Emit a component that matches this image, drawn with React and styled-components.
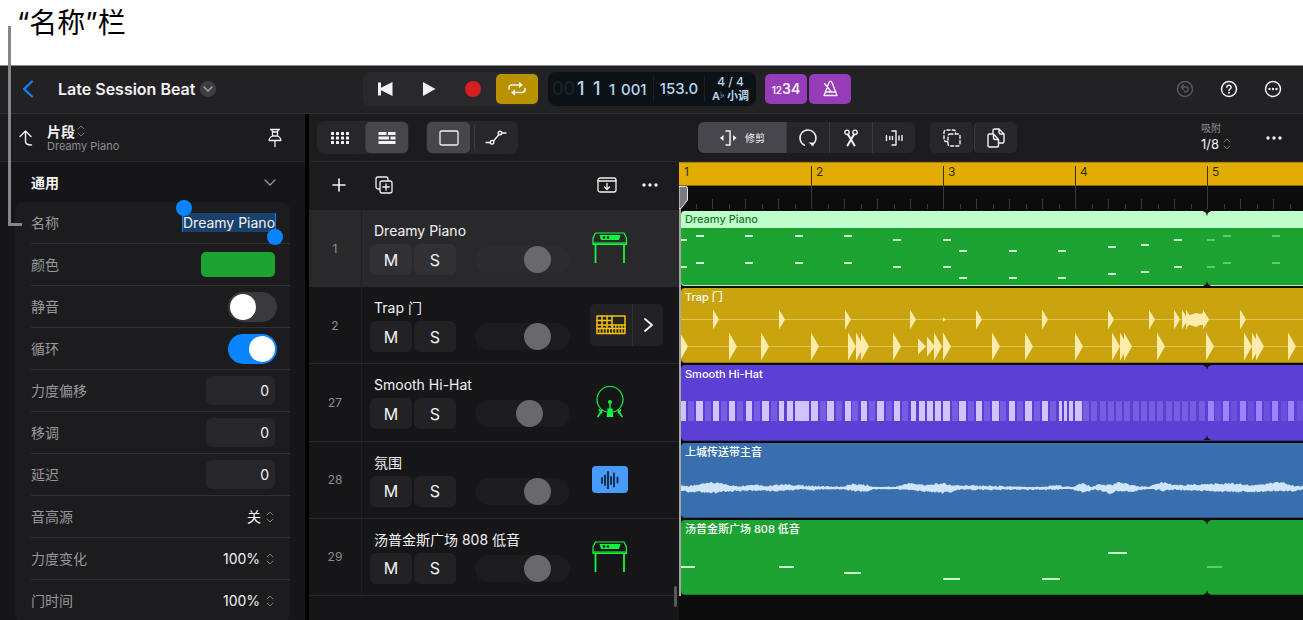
import React, { useState } from 'react'
import styled, { createGlobalStyle } from 'styled-components'

const GlobalStyle = createGlobalStyle`
  * {
    box-sizing: border-box;
    margin: 0;
    padding: 0;
  }
  body {
    background: #fff;
    color: #f2f2f4;
    font-family: Inter, 'Noto Sans CJK SC', sans-serif;
    font-size: 14px;
  }
  button,
  input,
  select {
    border: none;
    background: none;
    color: inherit;
    font-family: inherit;
    font-size: 14px;
    outline: 0;
  }
  button {
    cursor: pointer;
  }
`

/* ICONS */

const Icon = styled.svg`
  display: block;
  flex-shrink: 0;
  fill: none;
  stroke: currentColor;
  stroke-width: ${(p) => p.$weight || 1.5};
  stroke-linecap: round;
  stroke-linejoin: round;
  .solid {
    fill: currentColor;
    stroke: none;
  }
`

const UpDown = () => (
  <Icon width='8' height='12' viewBox='0 0 8 12' $weight={1}>
    <path d='M1 4 4 1 7 4M1 8 4 11 7 8' />
  </Icon>
)

const Dots = () => (
  <Icon width='16' height='4' viewBox='0 0 16 4'>
    <circle className='solid' cx='2' cy='2' r='1.7' />
    <circle className='solid' cx='8' cy='2' r='1.7' />
    <circle className='solid' cx='14' cy='2' r='1.7' />
  </Icon>
)

const Keyboard = () => (
  <Icon width='36' height='32' viewBox='0 0 36 32' $weight={1.2}>
    <path d='M3.5 1h28.500l2.500 5v6.500H1V6z' />
    <path className='solid' d='M7.500 3h21L27 8H9z' />
    <path d='M1 11h33.500' strokeWidth='0.8' />
    <path className='solid' d='M1 10.500h34V13H1z' opacity='0.6' />
    <path d='M3.500 13v18M32 13v18' strokeWidth='1.8' strokeLinecap='butt' />
    <circle cx='12' cy='5.500' r='1.3' fill='#161618' stroke='none' />
    <circle cx='16' cy='5.500' r='1.3' fill='#161618' stroke='none' />
  </Icon>
)

const DrumMachine = () => (
  <Icon width='30' height='20' viewBox='0 0 30 20' $weight={1.5}>
    <path d='M1 1h28v17.500H1z' />
    <path d='M1 5.500h15M1 10h28M1 13.500h28M6 1v12.500M11 1v12.500M16 1v12.500' />
    <path d='M4 13v5M7.200 13v5M10.300 13v5M13.500 13v5M16.700 10v8M19.800 10v8M23 10v8M26 10v8' strokeWidth='1.2' />
  </Icon>
)

const KickDrum = () => (
  <Icon width='30' height='34' viewBox='0 0 30 34' $weight={1.2}>
    <path d='M11.500 27A13 13 0 1 1 18.500 27' />
    <circle className='solid' cx='15' cy='17' r='2' />
    <path d='M15 18v8' strokeWidth='1.4' />
    <path className='solid' d='M12.500 23.500h5l.8 8.500h-6.600z' />
    <path d='M7 25.500 3 31.500M4.500 25l2 2.500M23 25.500 27 31.500M25.500 25l-2 2.500' strokeWidth='1.7' />
  </Icon>
)

const AudioWave = () => (
  <Icon width='18' height='18' viewBox='0 0 18 18' $weight={1.8}>
    <path d='M1 7v5M4 4.500v9.500M7 1v17M10 6v7M13 2.500v13M16.500 6.500v5' />
  </Icon>
)

/* LAYOUT */

const Page = styled.div`
  position: relative;
  display: flex;
  flex-direction: column;
  height: 100vh;
  overflow: hidden;
`
const Caption = styled.p`
  flex: none;
  height: 66px;
  padding: 3px 17px;
  border-bottom: 1px solid #86898a;
  color: #000;
  font-size: 28px;
  line-height: 40px;
`
const Callout = styled.span`
  position: absolute;
  z-index: 2;
  left: 8px;
  top: 26px;
  width: 14px;
  height: 200px;
  border: solid #868688;
  border-width: 0 0 3px 3px;
`

const Header = styled.header`
  display: flex;
  flex: none;
  align-items: center;
  height: 48px;
  padding-bottom: 2px;
  background: #222224;
  border-bottom: 1px solid #303032;
`
const Project = styled.div`
  display: flex;
  align-items: center;
  width: 363px;
  padding-left: 22px;
  h1 {
    margin: 0 5px 0 24px;
    font-size: 16px;
    font-weight: 600;
  }
`
const IconButton = styled.button`
  display: flex;
  align-items: center;
  justify-content: center;
  color: ${(p) => p.$color || '#f2f2f4'};
`
const RoundButton = styled(IconButton)`
  width: 16px;
  height: 16px;
  border-radius: 50%;
  background: #3e3e42;
  color: #a0a0a4;
`
const Transport = styled.div`
  display: flex;
  align-items: center;
  height: 34px;
  padding-right: 1px;
  border-radius: 6px;
  background: #29292d;
`
const TransportButton = styled(IconButton)`
  width: 44px;
  height: 30px;
`
const ModeButton = styled(IconButton)`
  width: 42px;
  height: 30px;
  margin-left: ${(p) => (p.$first ? '1px' : '2px')};
  border-radius: 5px;
  background: ${(p) => p.$bg};
  font-size: 14px;
  font-weight: 600;
  small {
    font-size: 10px;
  }
`
const Display = styled.div`
  display: flex;
  align-items: center;
  width: 208px;
  height: 34px;
  margin: 0 8px 0 9px;
  padding-left: 4px;
  border-radius: 8px;
  background: #0b1115;
  color: #b5d6ef;
  font-size: 15px;
  font-weight: 500;
`
const Position = styled.div`
  display: flex;
  align-items: baseline;
  width: 101px;
  font-size: 18px;
  span {
    width: 25px;
    color: #1b2329;
  }
  b {
    width: 16px;
    font-weight: 500;
  }
  small {
    width: 12px;
    font-size: 15px;
  }
`
const Tempo = styled.div`
  width: 52px;
  border: solid #1a2126;
  border-width: 0 1px;
  line-height: 26px;
  text-align: center;
`
const Signature = styled.div`
  flex: 1;
  font-size: 12px;
  line-height: 14px;
  text-align: center;
  p:last-child {
    font-size: 11px;
    font-weight: 600;
  }
  sup {
    font-family: 'DejaVu Sans', sans-serif;
    font-size: 9px;
    line-height: 0;
    vertical-align: 2px;
  }
`
const HeaderActions = styled.div`
  display: flex;
  gap: 26px;
  margin-left: auto;
  padding-right: 21px;
`

const Workspace = styled.div`
  display: flex;
  flex: 1;
  min-height: 0;
`

/* INSPECTOR */

const Inspector = styled.aside`
  flex: none;
  width: 309px;
  border-right: 4px solid #000;
  background: #161618;
`
const InspectorHead = styled.div`
  display: flex;
  align-items: center;
  height: 48px;
  padding: 0 23px 0 19px;
  border-bottom: 1px solid #29292b;
  background: #1c1c1e;
`
const InspectorTitle = styled.div`
  flex: 1;
  padding-left: 13px;
  button {
    display: flex;
    align-items: center;
    gap: 2px;
    height: 18px;
    font-weight: 600;
    svg {
      color: #77777b;
    }
  }
  p {
    color: #8d8d92;
    font-size: 11px;
    line-height: 13px;
  }
`
const SectionHead = styled.button`
  display: flex;
  align-items: center;
  justify-content: space-between;
  width: 100%;
  height: 40px;
  padding: 0 29px 0 31px;
  font-weight: 700;
  svg {
    color: #98989d;
  }
`
const Card = styled.div`
  margin: 0 15px;
  padding-left: 16px;
  border-radius: 8px;
  background: #1c1c1e;
`
const Field = styled.div`
  display: flex;
  align-items: center;
  justify-content: space-between;
  height: 42px;
  padding-right: ${(p) => (p.$wide ? '13px' : '15px')};
  border-bottom: 1px solid #303032;
  label {
    padding-bottom: 2px;
    color: #98989d;
  }
`
const NameEdit = styled.div`
  position: relative;
  background: #1a416b;
  box-shadow: -1px 0 0 #0a84ff, 1px 0 0 #0a84ff;
  input {
    display: block;
    width: 92px;
    height: 19px;
    text-align: right;
  }
  &::before,
  &::after {
    content: '';
    position: absolute;
    width: 16px;
    height: 16px;
    border-radius: 50%;
    background: #0a84ff;
  }
  &::before {
    left: -7px;
    top: -13px;
  }
  &::after {
    right: -8px;
    bottom: -13px;
  }
`
const Swatch = styled.button`
  width: 74px;
  height: 25px;
  border-radius: 5px;
  background: #1da331;
`
const Switch = styled.input`
  appearance: none;
  display: flex;
  align-items: center;
  width: 49px;
  height: 30px;
  padding: 2px;
  border-radius: 15px;
  background: #3a393e;
  cursor: pointer;
  &::before {
    content: '';
    width: 26px;
    height: 26px;
    border-radius: 50%;
    background: #fff;
  }
  &:checked {
    justify-content: flex-end;
    background: #0a84ff;
  }
`
const NumberInput = styled.input`
  width: 69px;
  height: 29px;
  padding-right: 6px;
  border-radius: 6px;
  background: #27262b;
  text-align: right;
`
const Picker = styled.div`
  display: flex;
  align-items: center;
  gap: ${(p) => p.$gap || 5}px;
  padding-right: 1px;
  color: #77777b;
  select {
    appearance: none;
    color: #f2f2f4;
    font-size: ${(p) => p.$size || 14}px;
  }
`

/* TOOLBAR */

const Main = styled.main`
  display: flex;
  flex: 1;
  flex-direction: column;
  min-width: 0;
`
const Toolbar = styled.div`
  display: flex;
  flex: none;
  align-items: center;
  height: 48px;
  padding-left: 8px;
  border-bottom: 1px solid #29292b;
  background: #1c1c1e;
`
const ViewGroup = styled.div`
  display: flex;
  gap: 4px;
  margin-right: 17px;
  padding: 1px;
  border-radius: 7px;
  background: #27272b;
`
const ToolButton = styled(IconButton)`
  gap: 8px;
  width: ${(p) => (p.$wide ? '88px' : '43px')};
  height: 31px;
  border-radius: ${(p) => (p.$flat ? '0' : '5px')};
  background: ${(p) => (p.$active ? '#47464c' : '#27272b')};
  font-size: 10px;
  & + & {
    border-left: ${(p) => (p.$flat ? '1px solid #3c3c40' : 'none')};
  }
`
const EditTools = styled.div`
  display: flex;
  margin: 0 15px 0 163px;
  overflow: hidden;
  border-radius: 6px;
`
const ClipTools = styled.div`
  display: flex;
  gap: 1px;
`
const Snap = styled.div`
  margin-left: auto;
  margin-right: 34px;
  padding-bottom: 2px;
  label {
    display: block;
    padding-bottom: 1px;
    color: #8d8d92;
    font-size: 10px;
    line-height: 14px;
  }
`
const MoreTools = styled(IconButton)`
  margin-right: 21px;
`

/* TRACKS */

const Arrange = styled.div`
  display: flex;
  flex: 1;
  min-height: 0;
`
const TrackList = styled.section`
  position: relative;
  flex: none;
  width: 370px;
  background: #161618;
`
const TrackTools = styled.div`
  display: flex;
  align-items: center;
  height: 48px;
  padding: 0 21px 2px 23px;
  background: #1c1c1e;
  button:nth-child(2) {
    margin: 0 auto 0 29px;
  }
  button:last-child {
    margin-left: 25px;
  }
`
const Rows = styled.div`
  display: grid;
  grid-template-rows: repeat(5, 1fr);
  height: 386px;
`
const TrackRow = styled.div`
  display: flex;
  border-bottom: 1px solid #29292b;
  background: ${(p) => (p.$selected ? '#29292b' : 'transparent')};
`
const TrackNumber = styled.div`
  display: flex;
  align-items: center;
  justify-content: center;
  width: 53px;
  border-right: 1px solid #202022;
  color: #8d8d92;
  font-size: 12px;
`
const TrackBody = styled.div`
  padding: 10px 0 0 8px;
  h2 {
    padding-left: 4px;
    font-size: 14px;
    font-weight: 400;
    line-height: 22px;
  }
`
const Controls = styled.div`
  display: flex;
  align-items: center;
  gap: 2px;
  margin-top: 2px;
`
const TrackButton = styled.button`
  width: 42px;
  height: 31px;
  border-radius: 6px;
  background: ${(p) => (p.$selected ? '#313135' : '#222225')};
  font-size: 16px;
`
const Volume = styled.input`
  appearance: none;
  width: 95px;
  height: 27px;
  margin-left: 17px;
  border-radius: 14px;
  background: ${(p) => (p.$selected ? '#2c2c30' : '#1c1c1e')};
  &::-webkit-slider-thumb {
    appearance: none;
    width: 27px;
    height: 27px;
    border-radius: 50%;
    background: #69696c;
  }
`
const Instrument = styled.div`
  display: flex;
  align-self: center;
  width: 73px;
  height: 42px;
  margin: 0 16px 0 auto;
  border-radius: 5px;
  background: ${(p) => (p.$boxed ? '#222225' : 'none')};
`
const InstrumentButton = styled(IconButton)`
  width: ${(p) => (p.$boxed ? '42px' : '40px')};
`
const Expand = styled(IconButton)`
  flex: 1;
  border-left: 1px solid #303033;
`
const AudioTile = styled.span`
  display: flex;
  align-items: center;
  justify-content: center;
  width: 36px;
  height: 27px;
  border-radius: 4px;
  background: #479bff;
  color: #13233a;
`
const ScrollThumb = styled.span`
  position: absolute;
  right: 2px;
  top: 424px;
  width: 3px;
  height: 21px;
  border-radius: 2px;
  background: #58585b;
`

/* TIMELINE */

const Timeline = styled.section`
  position: relative;
  flex: 1;
  min-width: 0;
  overflow: hidden;
  background: #0c0c0d;
`
const Ruler = styled.div`
  display: flex;
  height: 48px;
  overflow: hidden;
`
const Bar = styled.div`
  flex: 0 0 132px;
  .cycle {
    height: 24px;
    padding-top: 3px;
    border-top: 1px solid #a98205;
    border-bottom: 1px solid #8a6a08;
    background: #e1ad05;
  }
  .cycle span {
    display: block;
    height: 20px;
    padding-left: 4px;
    border-left: 1px solid ${(p) => (p.$first ? 'transparent' : '#3d2f02')};
    color: #3a2c00;
    font-size: 12px;
    line-height: 11px;
  }
`
const Ticks = styled.div`
  display: flex;
  align-items: flex-end;
  height: 23px;
`
const Tick = styled.i`
  flex: 1;
  height: ${(p) => p.$h}px;
  border-left: 1px solid #38383b;
`
const Lane = styled.div`
  display: flex;
  padding: 1px 0 1px 2px;
`
const Region = styled.div`
  display: grid;
  flex: 1;
  overflow: hidden;
  border-radius: 4px 0 0 4px;
  background: ${(p) => p.$color};
  box-shadow: inset 0 -1px 0 ${(p) => (p.$selected ? '#a9f5b6' : 'rgba(0, 0, 0, 0.25)')};
  h3,
  svg {
    grid-area: 1 / 1;
  }
  h3 {
    height: 17px;
    padding-left: 4px;
    background: ${(p) => (p.$selected ? '#bfffca' : 'none')};
    color: ${(p) => (p.$selected ? '#17782a' : '#fff')};
    font-size: 11px;
    font-weight: 500;
    line-height: ${(p) => (p.$selected ? '17px' : '19px')};
  }
`
const Playhead = styled.span`
  position: absolute;
  left: 0;
  top: 24px;
  width: 2px;
  height: 410px;
  background: #a5a5a7;
  svg {
    display: block;
  }
`

/* Region drawings: x counts from the left edge of the region, in pixels */

const LOOP_X = 526

const pianoNotes = [
  [0, 28, 6], [15, 24], [64, 24], [114, 24], [163, 24], [212, 28], [262, 28],
  [278, 39], [328, 39], [377, 39], [427, 35], [460, 33], [493, 28],
  [526, 28], [542, 24], [591, 24],
]

const bassNotes = [
  [0, 46, 14], [98, 46, 15], [163, 52, 17], [262, 58, 17], [361, 58, 18],
  [427, 32, 19], [526, 46, 15],
]

const snareHits = [32, 98, 164, 229, 295, 361, 427, 468, 493, 501, 505, 522, 559]
const kickHits = [
  [-1], [48], [80], [130], [167], [175], [180], [212], [237, 8], [246, 10],
  [253], [262], [311], [344], [394], [431], [439], [443], [476], [525],
  [563], [571], [575], [607],
]

const hatHits = [
  [0, 5], [15, 7], [32, 6], [48, 6], [65, 6], [81, 7], [98, 5], [106, 6],
  [114, 14], [130, 7], [146, 7], [164, 6], [180, 6], [196, 7], [213, 6],
  [230, 5], [238, 6], [246, 6], [254, 6], [262, 7], [278, 7], [295, 6],
  [311, 7], [328, 6], [344, 7], [361, 6], [378, 3], [383, 3], [388, 4],
  [394, 7],
]
const softHats = [
  7, 24, 40, 56, 73, 90, 139, 155, 171, 188, 205, 221, 271, 287, 303, 319,
  336, 353, 369, 402, 410, 419, 427, 435, 443, 452, 460, 468, 476, 485, 493,
  501, 509, 518,
]
const loopHats = [527, 542, 559, 575, 591, 607]
const loopSoftHats = [534, 550, 567, 583, 600, 616]

// x, height above and height below the middle line
const envelope = [
  [0, 2, 2], [8, 1, 3], [16, 2, 3], [27, 5, 4], [36, 4, 4], [44, 3, 3],
  [55, 1, 2], [75, 3, 2], [87, 1, 2], [101, 3, 2], [115, 2, 1], [135, 1, 1],
  [159, 0, 0], [171, 3, 2], [187, 2, 3], [193, 0, 0], [214, 0, 0],
  [227, 4, 1], [247, 2, 3], [261, 4, 4], [271, 2, 3], [280, 2, 1],
  [315, 1, 1], [339, 0, 1], [359, 0, 1], [377, 2, 1], [389, 0, 0],
  [402, 4, 4], [411, 0, 1], [418, 3, 1], [429, 2, 5], [437, 5, 2],
  [451, 2, 3], [467, 0, 0], [481, 5, 2], [493, 2, 1], [505, 2, 2],
  [523, 3, 2], [547, 4, 3], [571, 2, 3], [601, 5, 2], [613, 1, 2],
  [622, 2, 1], [900, 2, 2],
]

const noise = (n) => {
  const v = Math.sin(n * 12.9898) * 43758.5453
  return v - Math.floor(v)
}

const wavePath = () => {
  let top = ''
  const bottom = []
  let k = 0
  for (let x = 0; x <= 900; x += 1) {
    while (k < envelope.length - 2 && x > envelope[k + 1][0]) k++
    const a = envelope[k]
    const b = envelope[k + 1]
    const t = (x - a[0]) / (b[0] - a[0])
    const up = Math.max(1, a[1] + (b[1] - a[1]) * t + noise(x) * 2 - 0.3)
    const down = Math.max(1, a[2] + (b[2] - a[2]) * t + noise(x + 500) * 2 - 0.3)
    top += `${x === 0 ? 'M' : 'L'}${x} ${(45 - up).toFixed(1)}`
    bottom.unshift(`L${x} ${(45 + down).toFixed(1)}`)
  }
  return `${top}${bottom.join('')}Z`
}

const hit = (x, y, w, h) => `M${x} ${y - h}L${x + w} ${y}L${x} ${y + h}Z`

const LoopNotch = () => (
  <g fill='#161618'>
    <path d={`M${LOOP_X - 4} 0h8l-3 2-1 3-1-3z`} />
    <path d={`M${LOOP_X - 4} 75h8l-3-2-1-3-1 3z`} />
  </g>
)

const PianoArt = () => (
  <svg width='100%' height='75'>
    {pianoNotes.map(([x, y, w = 8]) => (
      <g key={x} fill='#c9ffd1' opacity={x >= LOOP_X ? 0.4 : 1}>
        <rect x={x} y={y} width={w} height='2' />
        <rect x={x} y={y + 27} width={w} height='2' />
      </g>
    ))}
    <LoopNotch />
  </svg>
)

const DrumArt = () => (
  <svg width='100%' height='75' fill='#ffecad'>
    <path d='M0 31.500h2000M0 58.500h2000' stroke='#e0c456' strokeWidth='1' />
    {snareHits.map((x) => (
      <path key={x} d={hit(x, 31.5, 6, 10)} />
    ))}
    <path d={hit(262, 31.5, 3, 2)} />
    <path d='M505 27l4 0 6-2 4 1 3-1 4 4 2 2-2 3-4 3-3 0-4 2-6-2-4 0z' />
    {kickHits.map(([x, h = 14]) => (
      <path key={x} d={hit(x, 58.5, 8, h)} />
    ))}
  </svg>
)

const HatArt = () => (
  <svg width='100%' height='75'>
    <g fill='#d0c4ff'>
      {hatHits.map(([x, w]) => <rect key={x} x={x} y='36' width={w} height='20' />)}
    </g>
    <g fill='#755ce0'>
      {softHats.map((x) => <rect key={x} x={x} y='36' width='6' height='20' />)}
    </g>
    <g fill='#9d83ff'>
      {loopHats.map((x) => <rect key={x} x={x} y='36' width='6' height='20' />)}
    </g>
    <g fill='#6b50dc'>
      {loopSoftHats.map((x) => <rect key={x} x={x} y='36' width='6' height='20' />)}
    </g>
    <LoopNotch />
  </svg>
)

const WaveArt = () => (
  <svg width='100%' height='75'>
    <path d={wavePath()} fill='#cfe5fb' />
  </svg>
)

const BassArt = () => (
  <svg width='100%' height='75' fill='#c9ffd1'>
    {bassNotes.map(([x, y, w]) => (
      <rect key={x} x={x} y={y} width={w} height='2' opacity={x >= LOOP_X ? 0.4 : 1} />
    ))}
    <LoopNotch />
  </svg>
)

const tracks = [
  { number: 1, name: 'Dreamy Piano', volume: 72, icon: <Keyboard />, tint: '#14f53f', color: '#1da331', art: <PianoArt />, selected: true },
  { number: 2, name: 'Trap 门', volume: 72, icon: <DrumMachine />, tint: '#f5c211', color: '#c9a40f', art: <DrumArt />, kit: true },
  { number: 27, name: 'Smooth Hi-Hat', volume: 60, icon: <KickDrum />, tint: '#14f53f', color: '#5c40d5', art: <HatArt /> },
  { number: 28, name: '氛围', region: '上城传送带主音', volume: 72, icon: <AudioTile><AudioWave /></AudioTile>, color: '#386fac', art: <WaveArt /> },
  { number: 29, name: '汤普金斯广场 808 低音', volume: 72, icon: <Keyboard />, tint: '#14f53f', color: '#1da331', art: <BassArt /> },
]

const numberFields = [
  { id: 'velocity', label: '力度偏移' },
  { id: 'transpose', label: '移调' },
  { id: 'delay', label: '延迟' },
]
const pickerFields = [
  { id: 'pitch', label: '音高源', value: '关' },
  { id: 'dynamics', label: '力度变化', value: '100%' },
  { id: 'gate', label: '门时间', value: '100%' },
]

const TopBar = () => (
  <Header>
    <Project>
      <IconButton $color='#0a84ff' aria-label='返回'>
        <Icon width='12' height='18' viewBox='0 0 12 18' $weight={2.2}>
          <path d='M10 1.500 2 9l8 7.500' />
        </Icon>
      </IconButton>
      <h1>Late Session Beat</h1>
      <RoundButton aria-label='项目菜单'>
        <Icon width='10' height='6' viewBox='0 0 10 6'>
          <path d='M1 1l4 4 4-4' />
        </Icon>
      </RoundButton>
    </Project>
    <Transport>
      <TransportButton aria-label='回到开头'>
        <Icon width='16' height='14' viewBox='0 0 16 14'>
          <path className='solid' d='M1 .5h3v5.300L15.500 0v14L4 8.200v5.300H1z' />
        </Icon>
      </TransportButton>
      <TransportButton aria-label='播放'>
        <Icon width='14' height='14' viewBox='0 0 14 14'>
          <path className='solid' d='M1 0l12.500 7L1 14z' />
        </Icon>
      </TransportButton>
      <TransportButton $color='#d71f20' aria-label='录音'>
        <Icon width='16' height='16' viewBox='0 0 16 16'>
          <circle className='solid' cx='8' cy='8' r='8' />
        </Icon>
      </TransportButton>
      <ModeButton $first $bg='#b89200' aria-label='循环'>
        <Icon width='18' height='16' viewBox='0 0 18 16' $weight={1.6}>
          <path d='M1 8V7a3 3 0 0 1 3-3h8M17 7.500v1a3 3 0 0 1-3 3H6' />
          <path className='solid' d='M11 .8 15 4l-4 3.200zM7 8.300 3 11.500l4 3.200z' />
        </Icon>
      </ModeButton>
    </Transport>
    <Display>
      <Position>
        <span>00</span>
        <b>1</b>
        <b>1</b>
        <small>1</small>
        <small>001</small>
      </Position>
      <Tempo>153.0</Tempo>
      <Signature>
        <p>4 / 4</p>
        <p>A<sup>♭</sup> 小调</p>
      </Signature>
    </Display>
    <ModeButton $first $bg='#963cb8' aria-label='预备拍'>
      <span><small>12</small>34</span>
    </ModeButton>
    <ModeButton $bg='#963cb8' aria-label='节拍器'>
      <Icon width='17' height='17' viewBox='0 0 17 17' $weight={1.3}>
        <path d='M2 15.500 7 2.500Q8.500 0 10 2.500l5 13zM3.500 12h10.500M9 11.500 2.500 3.500' />
      </Icon>
    </ModeButton>
    <HeaderActions>
      <IconButton $color='#5a5a5d' aria-label='撤销'>
        <Icon width='18' height='18' viewBox='0 0 18 18' $weight={1.4}>
          <circle cx='9' cy='9' r='7.500' />
          <path d='M7.500 4.800 5.300 7l2.200 2.200M5.500 7h4.300a2.300 2.300 0 0 1 0 4.700H8.500' />
        </Icon>
      </IconButton>
      <IconButton aria-label='帮助'>
        <Icon width='18' height='18' viewBox='0 0 18 18' $weight={1.5}>
          <circle cx='9' cy='9' r='7.500' />
          <path d='M6.900 7.200a2.100 2 0 1 1 3.300 1.600Q9 9.500 9 10.500' />
          <circle className='solid' cx='9' cy='12.800' r='1' />
        </Icon>
      </IconButton>
      <IconButton aria-label='更多'>
        <Icon width='18' height='18' viewBox='0 0 18 18' $weight={1.5}>
          <circle cx='9' cy='9' r='7.500' />
          <circle className='solid' cx='5.500' cy='9' r='1.2' />
          <circle className='solid' cx='9' cy='9' r='1.2' />
          <circle className='solid' cx='12.500' cy='9' r='1.2' />
        </Icon>
      </IconButton>
    </HeaderActions>
  </Header>
)

const RegionInspector = () => {
  const [name, setName] = useState('Dreamy Piano')
  const [mute, setMute] = useState(false)
  const [loop, setLoop] = useState(true)
  return (
    <Inspector>
      <InspectorHead>
        <IconButton aria-label='上一层'>
          <Icon width='15' height='18' viewBox='0 0 15 18' $weight={1.4}>
            <path d='M1 7.500 6.500 2 12 7.500M6.500 2.500v10q0 3.500 6 3.500' />
          </Icon>
        </IconButton>
        <InspectorTitle>
          <button>
            片段
            <UpDown />
          </button>
          <p>Dreamy Piano</p>
        </InspectorTitle>
        <IconButton aria-label='固定'>
          <Icon width='14' height='20' viewBox='0 0 14 20' $weight={1.3}>
            <path d='M2.500 1.500h9M3.500 1.500l1 2v4.500M10.500 1.500l-1 2v4.500M4.500 8Q1 9.500 1.200 12.500h11.600Q13 9.500 9.500 8M7 12.500v6' />
            <path d='M5 4h4M5 8h4' />
          </Icon>
        </IconButton>
      </InspectorHead>
      <SectionHead>
        通用
        <Icon width='12' height='7' viewBox='0 0 12 7' $weight={1.3}>
          <path d='M1 1l5 5 5-5' />
        </Icon>
      </SectionHead>
      <Card>
        <Field>
          <label htmlFor='name'>名称</label>
          <NameEdit>
            <input id='name' value={name} onChange={(e) => setName(e.target.value)} />
          </NameEdit>
        </Field>
        <Field>
          <label htmlFor='color'>颜色</label>
          <Swatch id='color' />
        </Field>
        <Field $wide>
          <label htmlFor='mute'>静音</label>
          <Switch id='mute' type='checkbox' checked={mute} onChange={() => setMute(!mute)} />
        </Field>
        <Field $wide>
          <label htmlFor='loop'>循环</label>
          <Switch id='loop' type='checkbox' checked={loop} onChange={() => setLoop(!loop)} />
        </Field>
        {numberFields.map((f) => (
          <Field key={f.id}>
            <label htmlFor={f.id}>{f.label}</label>
            <NumberInput id={f.id} defaultValue='0' />
          </Field>
        ))}
        {pickerFields.map((f) => (
          <Field key={f.id}>
            <label htmlFor={f.id}>{f.label}</label>
            <Picker>
              <select id={f.id}>
                <option>{f.value}</option>
              </select>
              <UpDown />
            </Picker>
          </Field>
        ))}
      </Card>
    </Inspector>
  )
}

const Tools = () => (
  <Toolbar>
    <ViewGroup>
      <ToolButton aria-label='网格'>
        <Icon width='18' height='14' viewBox='0 0 18 14'>
          {[1, 5.5, 10].map((y) =>
            [0, 5, 10, 15].map((x) => (
              <rect className='solid' key={`${x}-${y}`} x={x} y={y} width='3' height='3' rx='0.5' />
            ))
          )}
        </Icon>
      </ToolButton>
      <ToolButton $active aria-label='轨道'>
        <Icon width='18' height='14' viewBox='0 0 18 14'>
          <path className='solid' d='M.5 1h8v3h-8zM10 1h7.500v3H10zM.5 5.500h10.500v3H.5zM12.500 5.500h5v3h-5zM.5 10h17v3H.5z' />
        </Icon>
      </ToolButton>
    </ViewGroup>
    <ViewGroup>
      <ToolButton $active aria-label='片段'>
        <Icon width='20' height='16' viewBox='0 0 20 16' $weight={1.3}>
          <rect x='1' y='1' width='18' height='14' rx='1.5' />
        </Icon>
      </ToolButton>
      <ToolButton aria-label='自动化'>
        <Icon width='22' height='15' viewBox='0 0 22 15' $weight={1.4}>
          <path d='M1 12.500h4M16.500 3h4.500M8.500 11l5.500-6.500' />
          <circle cx='7' cy='12.300' r='1.8' />
          <circle cx='15' cy='3' r='1.8' />
        </Icon>
      </ToolButton>
    </ViewGroup>
    <EditTools>
      <ToolButton $wide $flat $active>
        <Icon width='18' height='16' viewBox='0 0 18 16' $weight={1.5}>
          <path d='M7 1h4v14H7' />
          <path className='solid' d='M4.500 5v6L1 8zM14 5v6l3.500-3z' />
        </Icon>
        修剪
      </ToolButton>
      <ToolButton $flat aria-label='循环'>
        <Icon width='20' height='20' viewBox='0 0 20 20' $weight={1.5}>
          <path d='M6.500 17.200A8 8 0 1 1 14 16.900' />
          <path className='solid' d='M10.500 14.500h5v4z' />
        </Icon>
      </ToolButton>
      <ToolButton $flat aria-label='拆分'>
        <Icon width='14' height='18' viewBox='0 0 14 18' $weight={1.4}>
          <circle cx='3' cy='3.300' r='2.2' />
          <circle cx='11' cy='3.300' r='2.2' />
          <path d='M4 5.500 10.500 16.500M10 5.500 3.500 16.500' strokeWidth='2' />
        </Icon>
      </ToolButton>
      <ToolButton $flat aria-label='伸展'>
        <Icon width='18' height='16' viewBox='0 0 18 16' $weight={1.4}>
          <path d='M7 1h4v14H7M1.500 5.500v5M4.800 6.500v3M14 6v4M17 5.500v5M7.500 6.500v3' />
        </Icon>
      </ToolButton>
    </EditTools>
    <ClipTools>
      <ToolButton aria-label='多选'>
        <Icon width='18' height='18' viewBox='0 0 18 18' $weight={1.4} strokeDasharray='3 2.2'>
          <path d='M4.500 12.500H3a2 2 0 0 1-2-2V3a2 2 0 0 1 2-2h7.500a2 2 0 0 1 2 2v1.500' />
          <rect x='5' y='5' width='12' height='12' rx='2' />
        </Icon>
      </ToolButton>
      <ToolButton aria-label='拷贝'>
        <Icon width='18' height='20' viewBox='0 0 18 20' $weight={1.4}>
          <path d='M2.500 6h4l5 5.500v6q0 1.500-1.500 1.500H2.500Q1 19 1 17.500v-10Q1 6 2.500 6zM6.500 6v4q0 1.500 1.500 1.500h3.500' />
          <path d='M6 5.500V2.500Q6 1 7.500 1H12l5 5v7.500q0 1.500-1.500 1.500h-3.500M12 1v3.500Q12 6 13.500 6H17' />
        </Icon>
      </ToolButton>
    </ClipTools>
    <Snap>
      <label htmlFor='snap'>吸附</label>
      <Picker $size={13} $gap={3}>
        <select id='snap'>
          <option>1/8</option>
        </select>
        <UpDown />
      </Picker>
    </Snap>
    <MoreTools aria-label='更多'>
      <Dots />
    </MoreTools>
  </Toolbar>
)

const Track = ({ track }) => (
  <TrackRow $selected={track.selected}>
    <TrackNumber>{track.number}</TrackNumber>
    <TrackBody>
      <h2>{track.name}</h2>
      <Controls>
        <TrackButton $selected={track.selected}>M</TrackButton>
        <TrackButton $selected={track.selected}>S</TrackButton>
        <Volume
          type='range'
          defaultValue={track.volume}
          $selected={track.selected}
          aria-label={`${track.name} 音量`}
        />
      </Controls>
    </TrackBody>
    <Instrument $boxed={track.kit}>
      <InstrumentButton $boxed={track.kit} $color={track.tint} aria-label='乐器'>
        {track.icon}
      </InstrumentButton>
      {track.kit && (
        <Expand aria-label='展开'>
          <Icon width='9' height='14' viewBox='0 0 9 14' $weight={1.8}>
            <path d='M1 1l7 6-7 6' />
          </Icon>
        </Expand>
      )}
    </Instrument>
  </TrackRow>
)

const App = () => {
  return (
    <Page>
      <GlobalStyle />
      <Caption>“名称”栏</Caption>
      <Callout />
      <TopBar />
      <Workspace>
        <RegionInspector />
        <Main>
          <Tools />
          <Arrange>
            <TrackList>
              <TrackTools>
                <IconButton aria-label='添加轨道'>
                  <Icon width='14' height='14' viewBox='0 0 14 14' $weight={1.6}>
                    <path d='M7 1v12M1 7h12' />
                  </Icon>
                </IconButton>
                <IconButton aria-label='复制轨道'>
                  <Icon width='18' height='18' viewBox='0 0 18 18' $weight={1.3}>
                    <path d='M4.500 13H3a2 2 0 0 1-2-2V3a2 2 0 0 1 2-2h8a2 2 0 0 1 2 2v1.500' />
                    <rect x='5' y='5' width='12' height='12' rx='2' />
                    <path d='M11 7.800v6.400M7.800 11h6.400' />
                  </Icon>
                </IconButton>
                <IconButton aria-label='导入'>
                  <Icon width='20' height='16' viewBox='0 0 20 16' $weight={1.3}>
                    <rect x='1' y='1' width='18' height='14' rx='2' />
                    <path d='M1 4h18M10 6.500v6M7.500 10l2.500 2.500 2.500-2.500' />
                  </Icon>
                </IconButton>
                <IconButton aria-label='更多'>
                  <Dots />
                </IconButton>
              </TrackTools>
              <Rows>
                {tracks.map((t) => (
                  <Track key={t.number} track={t} />
                ))}
              </Rows>
              <ScrollThumb />
            </TrackList>
            <Timeline>
              <Ruler>
                {[1, 2, 3, 4, 5].map((n) => (
                  <Bar key={n} $first={n === 1}>
                    <div className='cycle'>
                      <span>{n}</span>
                    </div>
                    <Ticks>
                      {[23, 5, 10, 5, 10, 5, 10, 5].map((h, i) => (
                        <Tick key={i} $h={h} />
                      ))}
                    </Ticks>
                  </Bar>
                ))}
              </Ruler>
              <Rows>
                {tracks.map((t) => (
                  <Lane key={t.number}>
                    <Region $color={t.color} $selected={t.selected}>
                      <h3>{t.region || t.name}</h3>
                      {t.art}
                    </Region>
                  </Lane>
                ))}
              </Rows>
              <Playhead>
                <svg width='9' height='24' viewBox='0 0 9 24' overflow='visible'>
                  <path d='M0 .5h6.500q2 0 2 2V14L2 22.500H0z' fill='#7b7b7e' stroke='#e8e8ea' />
                </svg>
              </Playhead>
            </Timeline>
          </Arrange>
        </Main>
      </Workspace>
    </Page>
  )
}

export default App
